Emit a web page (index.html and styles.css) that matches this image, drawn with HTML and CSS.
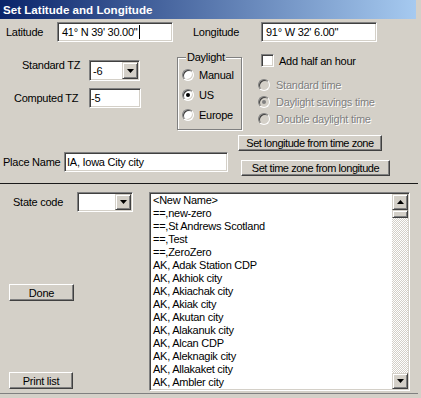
FILE: index.html
```html
<!DOCTYPE html>
<html>
<head>
<meta charset="utf-8">
<title>Set Latitude and Longitude</title>
<link rel="stylesheet" href="styles.css">
</head>
<body>
<div class="window">
  <div class="titlebar">Set Latitude and Longitude</div>

  <div class="coords">
    <span class="lbl lat-lbl">Latitude</span>
    <div class="field lat-field">41° N 39' 30.00"<span class="caret"></span></div>
    <span class="lbl lon-lbl">Longitude</span>
    <div class="field lon-field">91° W 32' 6.00"</div>
  </div>

  <div class="mid">
    <div class="tz-col">
      <div class="tz-row std-row">
        <span class="lbl std-lbl">Standard TZ</span>
        <div class="field combo std-combo">
          <span class="combo-text">-6</span>
          <span class="drop-btn"><svg width="7" height="4" viewBox="0 0 7 4"><polygon points="0,0 7,0 3.5,4" fill="#000"/></svg></span>
        </div>
      </div>
      <div class="tz-row comp-row">
        <span class="lbl comp-lbl">Computed TZ</span>
        <div class="field comp-field">-5</div>
      </div>
    </div>

    <div class="group">
      <span class="legend">Daylight</span>
      <div class="opt"><span class="radio"></span>Manual</div>
      <div class="opt"><span class="radio checked"></span>US</div>
      <div class="opt"><span class="radio"></span>Europe</div>
    </div>

    <div class="dst-col">
      <div class="check-row"><span class="checkbox"></span>Add half an hour</div>
      <div class="dopt"><span class="radio off"></span><span class="dtext">Standard time</span></div>
      <div class="dopt"><span class="radio off checked"></span><span class="dtext">Daylight savings time</span></div>
      <div class="dopt"><span class="radio off"></span><span class="dtext">Double daylight time</span></div>
    </div>
  </div>

  <div class="place-row">
    <span class="lbl place-lbl">Place Name</span>
    <div class="field place-field">IA, Iowa City city</div>
    <div class="btn-col">
      <div class="btn btn-lon">Set longitude from time zone</div>
      <div class="btn btn-tz">Set time zone from longitude</div>
    </div>
  </div>

  <div class="sep"></div>

  <div class="bottom">
    <div class="left-col">
      <div class="state-row">
        <span class="lbl state-lbl">State code</span>
        <div class="field combo state-combo">
          <span class="combo-text"></span>
          <span class="drop-btn"><svg width="7" height="4" viewBox="0 0 7 4"><polygon points="0,0 7,0 3.5,4" fill="#000"/></svg></span>
        </div>
      </div>
      <div class="btn done-btn">Done</div>
      <div class="btn print-btn">Print list</div>
    </div>

    <div class="listbox">
      <div class="items">
        <div class="item">&lt;New Name&gt;</div>
        <div class="item">==,new-zero</div>
        <div class="item">==,St Andrews Scotland</div>
        <div class="item">==,Test</div>
        <div class="item">==,ZeroZero</div>
        <div class="item">AK, Adak Station CDP</div>
        <div class="item">AK, Akhiok city</div>
        <div class="item">AK, Akiachak city</div>
        <div class="item">AK, Akiak city</div>
        <div class="item">AK, Akutan city</div>
        <div class="item">AK, Alakanuk city</div>
        <div class="item">AK, Alcan CDP</div>
        <div class="item">AK, Aleknagik city</div>
        <div class="item">AK, Allakaket city</div>
        <div class="item">AK, Ambler city</div>
      </div>
      <div class="scrollbar">
        <div class="sb-btn"><svg width="7" height="4" viewBox="0 0 7 4"><polygon points="0,4 7,4 3.5,0" fill="#000"/></svg></div>
        <div class="sb-thumb"></div>
        <div class="sb-track"></div>
        <div class="sb-btn"><svg width="7" height="4" viewBox="0 0 7 4"><polygon points="0,0 7,0 3.5,4" fill="#000"/></svg></div>
      </div>
    </div>
  </div>
</div>
</body>
</html>
```

FILE: styles.css
```css
* { box-sizing: border-box; }
html, body { margin: 0; padding: 0; }
body {
  background: #d4d0c8;
  font-family: "Liberation Sans", Arial, sans-serif;
  font-size: 11px;
  letter-spacing: -0.25px;
  color: #000;
  width: 421px;
  height: 398px;
  overflow: hidden;
}
.window { width: 418px; height: 394px; border-bottom: 1px solid #808080; }

.titlebar {
  width: 416px;
  height: 19px;
  line-height: 19px;
  padding-left: 3px;
  color: #fff;
  font-weight: bold;
  font-size: 11.6px;
  letter-spacing: 0;
  background: linear-gradient(to right, #0a246a, #a6caf0);
  white-space: nowrap;
}

.lbl { line-height: 20px; white-space: nowrap; flex: none; }

.field {
  flex: none;
  height: 20px;
  background: #fff;
  border: 1px solid;
  border-color: #808080 #fff #fff #808080;
  box-shadow: inset 1px 1px #404040, inset -1px -1px #d4d0c8;
  padding-left: 3px;
  white-space: nowrap;
  display: flex;
  align-items: center;
}

/* coordinates row */
.coords { display: flex; margin-top: 3px; height: 20px; }
.lat-lbl { width: 57px; padding-left: 6px; }
.lon-lbl { width: 88px; padding-left: 20px; }
.lat-field, .lon-field { width: 116px; padding-left: 4px; }
.caret { display: inline-block; width: 1px; height: 14px; background: #000; margin-left: 1px; }

/* middle block */
.mid { display: flex; align-items: flex-start; height: 93px; }

.tz-col { width: 177px; padding-top: 18px; flex: none; }
.tz-row { display: flex; align-items: flex-start; }
.std-row { height: 21px; }
.std-lbl { width: 89px; padding-left: 22px; line-height: 13px; margin-top: -1px; }
.comp-row { margin-top: 7px; height: 20px; }
.comp-lbl { width: 89px; padding-left: 14px; }
.comp-field { width: 52px; padding-left: 1px; }

.combo { padding-left: 3px; padding-right: 1px; justify-content: space-between; }
.std-combo { width: 51px; height: 21px; }
.combo-text { flex: 1; }
.drop-btn {
  width: 16px;
  height: 17px;
  background: #d4d0c8;
  border: 1px solid;
  border-color: #d4d0c8 #404040 #404040 #d4d0c8;
  box-shadow: inset 1px 1px #fff, inset -1px -1px #808080;
  display: flex;
  align-items: center;
  justify-content: center;
  flex: none;
}
.drop-btn svg { display: block; }

.group {
  flex: none;
  margin-top: 15px;
  width: 65px;
  height: 73px;
  border: 1px solid #808080;
  box-shadow: inset 1px 1px #fff, 1px 1px #fff;
}
.legend {
  display: block;
  width: fit-content;
  margin: -7px 0 0 8px;
  padding: 0 1px;
  background: #d4d0c8;
  line-height: 13px;
}
.opt { display: flex; align-items: center; height: 20px; padding-left: 4px; white-space: nowrap; }
.group .opt:first-of-type { margin-top: 1px; }
.opt .radio { margin-right: 5px; }

.radio {
  flex: none;
  position: relative;
  width: 12px;
  height: 12px;
  border-radius: 50%;
  background: #fff;
  border: 1px solid;
  border-color: #808080 #fff #fff #808080;
  box-shadow: inset 1px 1px #404040, inset -1px -1px #d4d0c8;
}
.radio.checked::after {
  content: "";
  position: absolute;
  left: 3px;
  top: 3px;
  width: 4px;
  height: 4px;
  border-radius: 50%;
  background: #000;
}
.radio.off { background: #d4d0c8; }
.radio.off.checked::after { background: #808080; }

.dst-col { flex: none; margin-left: 16px; margin-top: 12px; }
.check-row { display: flex; align-items: center; height: 13px; padding-left: 3px; white-space: nowrap; }
.checkbox {
  flex: none;
  width: 13px;
  height: 13px;
  margin-right: 5px;
  background: #fff;
  border: 1px solid;
  border-color: #808080 #fff #fff #808080;
  box-shadow: inset 1px 1px #404040, inset -1px -1px #d4d0c8;
}
.dopt { display: flex; align-items: center; height: 17px; white-space: nowrap; }
.check-row + .dopt { margin-top: 9px; }
.dopt .radio { margin-right: 6px; }
.dtext { color: #808080; text-shadow: 1px 1px 0 #fff; }

/* place row */
.place-row { display: flex; align-items: flex-start; height: 48px; }
.place-lbl { width: 64px; padding-left: 3px; margin-top: 17px; }
.place-field { width: 164px; margin-top: 17px; padding-left: 2px; }
.btn-col { margin-left: 10px; }

.btn {
  height: 16px;
  background: #d4d0c8;
  border: 1px solid;
  border-color: #fff #404040 #404040 #fff;
  box-shadow: inset -1px -1px #808080;
  display: flex;
  align-items: center;
  justify-content: center;
  white-space: nowrap;
}
.btn-lon { width: 144px; letter-spacing: -0.45px; }
.btn-tz { width: 149px; margin-top: 9px; margin-left: 3px; letter-spacing: -0.45px; }

.sep { width: 418px; height: 1px; background: #1a1a1a; }

/* bottom */
.bottom { display: flex; align-items: flex-start; }
.left-col { width: 149px; flex: none; padding-top: 8px; }
.state-row { display: flex; height: 20px; }
.state-lbl { width: 77px; padding-left: 13px; }
.state-combo { width: 56px; }
.state-combo .drop-btn { height: 16px; }

.done-btn { width: 65px; height: 17px; margin: 72px 0 0 9px; }
.print-btn { width: 64px; height: 17px; margin: 71px 0 0 9px; }

.listbox {
  flex: none;
  margin-top: 8px;
  width: 261px;
  height: 199px;
  background: #fff;
  border: 1px solid;
  border-color: #808080 #fff #fff #808080;
  box-shadow: inset 1px 1px #404040, inset -1px -1px #d4d0c8;
  padding: 1px;
  display: flex;
}
.items { flex: 1; overflow: hidden; }
.item { height: 13px; line-height: 13px; padding-left: 2px; white-space: nowrap; }

.scrollbar { width: 16px; flex: none; display: flex; flex-direction: column; }
.sb-btn, .sb-thumb {
  flex: none;
  background: #d4d0c8;
  border: 1px solid;
  border-color: #d4d0c8 #404040 #404040 #d4d0c8;
  box-shadow: inset 1px 1px #fff, inset -1px -1px #808080;
}
.sb-btn { height: 16px; display: flex; align-items: center; justify-content: center; }
.sb-btn svg { display: block; }
.sb-thumb { height: 8px; }
.sb-track {
  flex: 1;
  background: repeating-conic-gradient(#d4d0c8 0 25%, #fff 0 50%) 0 0 / 2px 2px;
}
```
